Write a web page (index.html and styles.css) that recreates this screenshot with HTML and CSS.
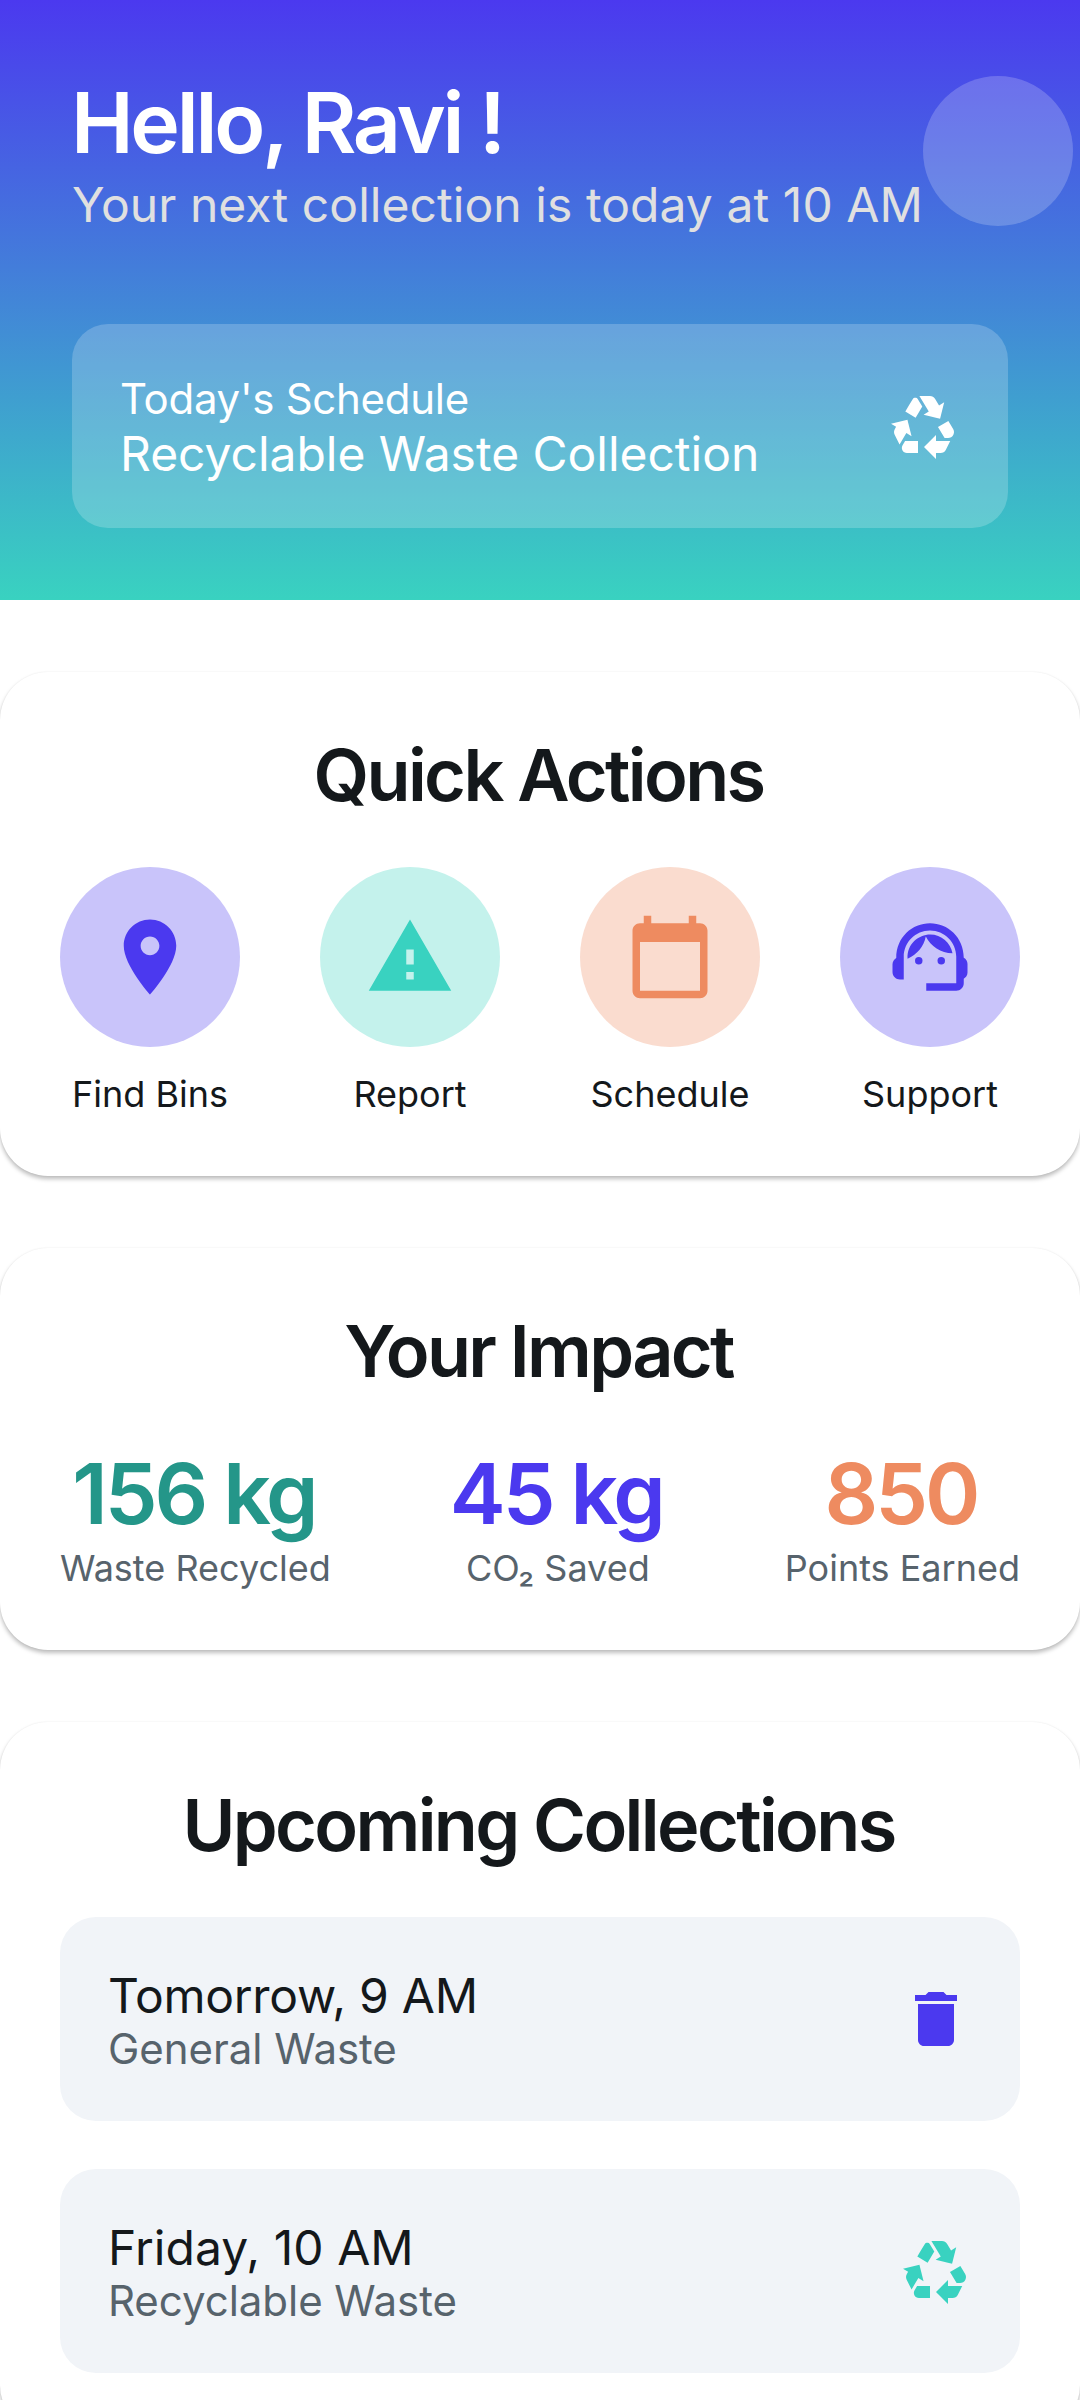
FILE: index.html
```html
<!DOCTYPE html>
<html lang="en">
<head>
<meta charset="utf-8">
<title>Waste Collection</title>
<link rel="stylesheet" href="styles.css">
</head>
<body>
<svg class="symbols" aria-hidden="true">
  <symbol id="recycle" viewBox="0 0 24 24"><path d="M5.77 7.15L7.2 4.78l1.03-1.71c.39-.65 1.33-.65 1.72 0l1.48 2.46-1.23 2.06-1 1.62-3.43-2.06zm15.95 5.82l-1.6-2.66-3.46 2L18.87 16H20c.76 0 1.45-.43 1.79-1.11.14-.28.21-.58.21-.89 0-.36-.1-.71-.28-1.03zM16 21h1.5c.76 0 1.45-.43 1.79-1.11L20.74 17H16v-2l-4 4 4 4v-2zm-6-4H5.7l-.84 1.41c-.3.5-.32 1.12-.06 1.65.28.57.87.94 1.52.94H10v-4zm-3.88-2.65l1.73 1.04L6.48 9.9 1 11.27l1.7 1.02-.41.69c-.35.59-.38 1.31-.07 1.92l1.63 3.26 2.27-3.81zm10.9-9.21l-1.3-2.17C15.35 2.37 14.7 2 14 2h-3.53l3.12 5.2-1.72 1.03 5.49 1.37 1.37-5.49-1.71 1.03z"/></symbol>
</svg>
<main class="screen">
  <header class="hero">
    <div class="avatar"></div>
    <div class="greeting">
      <h1 class="hello">Hello, Ravi !</h1>
      <p class="next">Your next collection is today at 10 AM</p>
    </div>
    <div class="today">
      <div class="today-text">
        <p class="today-label">Today's Schedule</p>
        <p class="today-name">Recyclable Waste Collection</p>
      </div>
      <svg class="icon"><use href="#recycle"/></svg>
    </div>
  </header>

  <section class="card">
    <h2 class="title">Quick Actions</h2>
    <div class="row">
      <div class="action">
        <div class="disc violet"><svg class="icon-lg" viewBox="0 0 24 24"><path d="M12 2C8.13 2 5 5.13 5 9c0 5.25 7 13 7 13s7-7.75 7-13c0-3.87-3.13-7-7-7zm0 9.5c-1.38 0-2.5-1.12-2.5-2.5s1.12-2.5 2.5-2.5 2.5 1.12 2.5 2.5-1.12 2.5-2.5 2.5z"/></svg></div>
        <span class="caption">Find Bins</span>
      </div>
      <div class="action">
        <div class="disc teal"><svg class="icon-lg" viewBox="0 0 24 24"><path d="M1 21h22L12 2 1 21zm12-3h-2v-2h2v2zm0-4h-2v-4h2v4z"/></svg></div>
        <span class="caption">Report</span>
      </div>
      <div class="action">
        <div class="disc orange"><svg class="icon-lg" viewBox="0 0 24 24"><path d="M20 3h-1V1h-2v2H7V1H5v2H4c-1.1 0-2 .9-2 2v16c0 1.1.9 2 2 2h16c1.1 0 2-.9 2-2V5c0-1.1-.9-2-2-2zm0 18H4V8h16v13z"/></svg></div>
        <span class="caption">Schedule</span>
      </div>
      <div class="action">
        <div class="disc violet"><svg class="icon-lg" viewBox="0 0 24 24"><path d="M21 12.22C21 6.73 16.74 3 12 3c-4.69 0-9 3.65-9 9.28-.6.34-1 .98-1 1.72v2c0 1.1.9 2 2 2h1v-6.1c0-3.87 3.13-7 7-7s7 3.13 7 7V19h-8v2h8c1.1 0 2-.9 2-2v-1.22c.59-.31 1-.92 1-1.64v-2.3c0-.7-.41-1.31-1-1.62z"/><circle cx="9" cy="13" r="1"/><circle cx="15" cy="13" r="1"/><path d="M18 11.03C17.52 8.18 15.04 6 12.05 6c-3.03 0-6.29 2.51-6.03 6.45 2.47-1.01 4.33-3.21 4.86-5.89 1.31 2.63 4 4.44 7.12 4.47z"/></svg></div>
        <span class="caption">Support</span>
      </div>
    </div>
  </section>

  <section class="card">
    <h2 class="title">Your Impact</h2>
    <div class="row">
      <div class="stat"><span class="value green">156 kg</span><span class="caption muted">Waste Recycled</span></div>
      <div class="stat"><span class="value indigo">45 kg</span><span class="caption muted">CO₂ Saved</span></div>
      <div class="stat"><span class="value coral">850</span><span class="caption muted">Points Earned</span></div>
    </div>
  </section>

  <section class="card">
    <h2 class="title">Upcoming Collections</h2>
    <div class="list">
      <div class="item">
        <div class="item-text">
          <p class="item-time tight">Tomorrow, 9 AM</p>
          <p class="item-kind muted">General Waste</p>
        </div>
        <svg class="icon indigo" viewBox="0 0 24 24"><path d="M6 19c0 1.1.9 2 2 2h8c1.1 0 2-.9 2-2V7H6v12zM19 4h-3.5l-1-1h-5l-1 1H5v2h14V4z"/></svg>
      </div>
      <div class="item">
        <div class="item-text">
          <p class="item-time">Friday, 10 AM</p>
          <p class="item-kind muted">Recyclable Waste</p>
        </div>
        <svg class="icon aqua"><use href="#recycle"/></svg>
      </div>
    </div>
  </section>
</main>
</body>
</html>
```
FILE: styles.css
```css
* { box-sizing: border-box; margin: 0; padding: 0; }

body {
  background: #fff;
  color: #14181b;
  font-family: Inter, "Liberation Sans", sans-serif;
}

.symbols { display: none; }

.screen {
  display: flex;
  flex-direction: column;
  gap: 72px;
  height: 2400px;
  overflow: hidden;
}

.hero {
  position: relative;
  display: flex;
  flex-direction: column;
  justify-content: space-between;
  flex: none;
  height: 600px;
  padding: 72px;
  background: linear-gradient(#4b39ef, #39d2c0);
  color: #fff;
}

.avatar {
  position: absolute;
  top: 76px;
  left: 923px;
  width: 150px;
  height: 150px;
  border-radius: 50%;
  background: rgba(255, 255, 255, .2);
}

.hello, .value {
  font-size: 84px;
  font-weight: 600;
  line-height: 102px;
  letter-spacing: -.037em;
  white-space: nowrap;
}

.hello { margin-left: -1px; letter-spacing: -.039em; }
.value { padding-right: 3px; }

.next {
  color: #e0e0e0;
  font-size: 48px;
  line-height: 62px;
  letter-spacing: .06px;
  white-space: nowrap;
}

.today, .item {
  display: flex;
  align-items: center;
  justify-content: space-between;
  height: 204px;
  padding: 0 48px;
  border-radius: 36px;
}

.today { background: rgba(255, 255, 255, .2); }
.today-text { padding-top: 2px; }
.today-label { font-size: 42px; line-height: 53px; letter-spacing: -.28px; }
.today-name { font-size: 48px; line-height: 57px; letter-spacing: -.03px; }

.item { background: #f1f4f8; }
.item-text { padding-top: 4px; }
.item-time { font-size: 48px; line-height: 55px; letter-spacing: .06px; }
.item-kind { font-size: 42px; line-height: 51px; letter-spacing: -.04px; }
.tight { letter-spacing: -.28px; }

.caption {
  margin-bottom: -2px;
  font-size: 36px;
  line-height: 47px;
  white-space: nowrap;
}

.icon { width: 72px; height: 72px; fill: currentColor; }
.icon-lg { width: 90px; height: 90px; fill: currentColor; }

.card {
  display: flex;
  flex-direction: column;
  gap: 50px;
  flex: none;
  padding: 60px;
  border-radius: 48px;
  background: #fff;
  box-shadow: 0 3px 4px rgba(0, 0, 0, .26), 0 0 2px rgba(0, 0, 0, .06);
}

.title {
  padding-right: 3px;
  font-size: 72px;
  font-weight: 600;
  line-height: 85px;
  letter-spacing: -.037em;
  text-align: center;
}

.row { display: flex; justify-content: space-between; }

.action {
  display: flex;
  flex-direction: column;
  align-items: center;
  gap: 24px;
  width: 180px;
}

.disc {
  display: flex;
  align-items: center;
  justify-content: center;
  width: 180px;
  height: 180px;
  border-radius: 50%;
}

.violet { background: #c9c4fa; color: #4b39ef; }
.teal { background: #c4f2ec; color: #39d2c0; }
.orange { background: #fadccf; color: #ee8b60; }

.stat { display: flex; flex-direction: column; align-items: center; }

.green { color: #249689; }
.indigo { color: #4b39ef; }
.coral { color: #ee8b60; }
.aqua { color: #39d2c0; }
.muted { color: #57636c; }

.list { display: flex; flex-direction: column; gap: 48px; }
```
